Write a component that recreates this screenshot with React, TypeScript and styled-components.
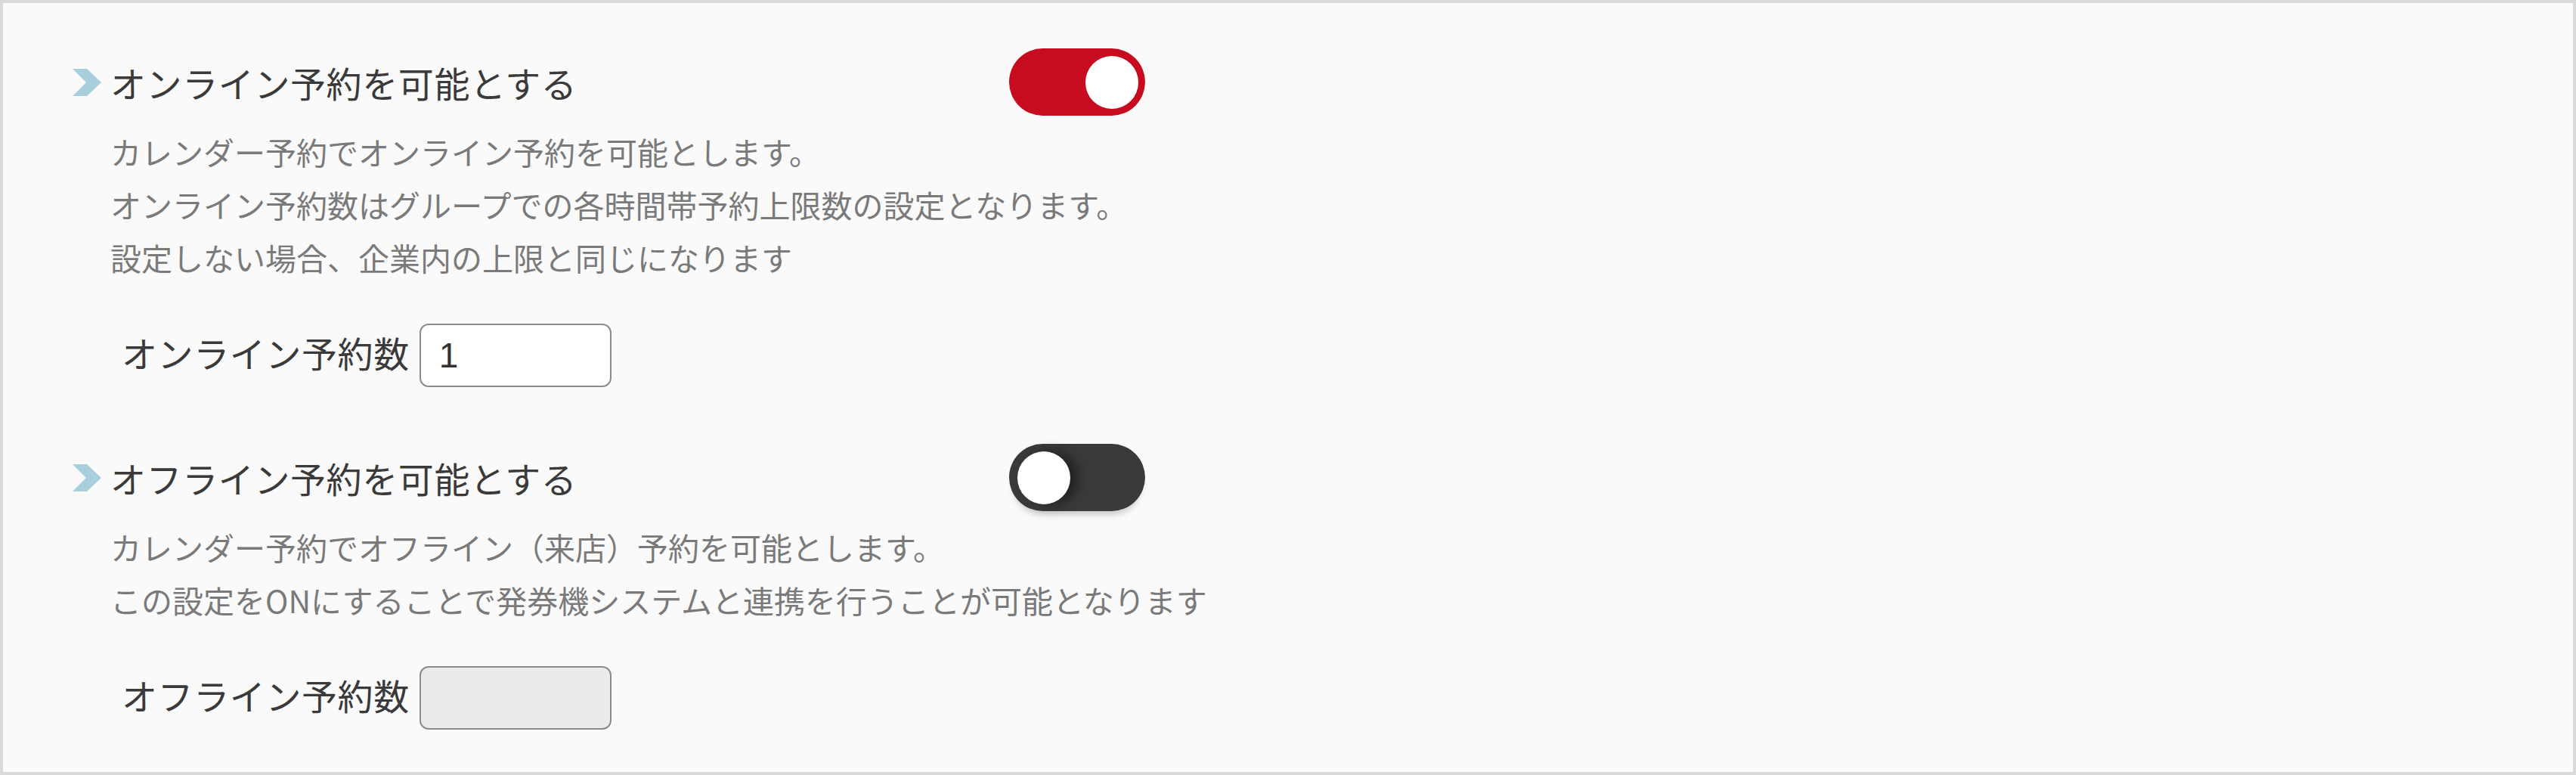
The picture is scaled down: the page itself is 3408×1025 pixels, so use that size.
import React, { useState } from "react"
import styled, { createGlobalStyle } from "styled-components"

const GlobalStyle = createGlobalStyle`
  html, body {
    margin: 0;
    padding: 0;
    background: #fafafa;
  }
  body {
    font-family: "Noto Sans CJK JP", "Noto Sans", sans-serif;
    color: #333;
  }
`

const Panel = styled.div`
  box-sizing: border-box;
  height: 1025px;
  border: 4px solid #d9d9d9;
  background: #fafafa;
  padding: 60px 0 0 92px;
`

const Section = styled.section`
  & + & {
    margin-top: 75px;
  }
`

const HeaderRow = styled.div`
  display: grid;
  grid-template-columns: 1239px 180px;
  align-items: center;
  height: 89px;
`

const Heading = styled.h3`
  display: flex;
  align-items: center;
  gap: 12px;
  margin: 0;
  font-size: 47px;
  font-weight: 400;
  letter-spacing: 0.6px;
  color: #3a3a3a;
  line-height: 1;
`

const Description = styled.div`
  margin-top: 12px;
  padding-left: 50px;
  font-size: 41px;
  line-height: 70px;
  color: #7a7a7a;
  p {
    margin: 0;
  }
`

const FieldRow = styled.label`
  display: flex;
  align-items: center;
  gap: 13px;
  margin-top: 53px;
  padding-left: 65px;
`

const FieldLabel = styled.span`
  font-size: 47px;
  letter-spacing: 0.6px;
  color: #3a3a3a;
  margin-top: -10px;
`

const NumberInput = styled.input<{ $disabled?: boolean }>`
  box-sizing: border-box;
  width: 254px;
  height: 84px;
  padding: 0 0 0 24px;
  border: 2px solid #8c8c8c;
  border-radius: 12px;
  background: ${(p) => (p.$disabled ? "#ebebeb" : "#fff")};
  font-family: "Liberation Sans", Arial, sans-serif;
  font-size: 46px;
  color: #333;
  outline: none;
`

const Track = styled.button<{ $on: boolean }>`
  position: relative;
  width: 180px;
  height: 89px;
  padding: 0;
  border: none;
  border-radius: 45px;
  cursor: pointer;
  background: ${(p) => (p.$on ? "#c80c1f" : "#3a3a3a")};
  box-shadow: ${(p) => (p.$on ? "none" : "0 10px 10px -6px rgba(0, 0, 0, 0.22)")};
`

const Knob = styled.span<{ $on: boolean }>`
  position: absolute;
  top: 9.5px;
  left: ${(p) => (p.$on ? "101px" : "11px")};
  width: 70px;
  height: 70px;
  border-radius: 50%;
  background: #fff;
  box-shadow: ${(p) => (p.$on ? "none" : "10px 0 16px rgba(0, 0, 0, 0.45)")};
`

const Chevron = () => (
  <svg width="38" height="36" viewBox="0 0 38 36">
    <polygon points="0,0 19,0 38,18 19,36 0,36 18,18" fill="#a8d0dc" />
  </svg>
)

const Toggle = ({ on, onChange }: { on: boolean; onChange: () => void }) => (
  <Track $on={on} onClick={onChange} aria-pressed={on}>
    <Knob $on={on} />
  </Track>
)

type SettingProps = {
  title: string
  lines: string[]
  fieldLabel: string
  value: string
  on: boolean
  onToggle: () => void
}

const Setting = ({ title, lines, fieldLabel, value, on, onToggle }: SettingProps) => (
  <Section>
    <HeaderRow>
      <Heading>
        <Chevron />
        {title}
      </Heading>
      <Toggle on={on} onChange={onToggle} />
    </HeaderRow>
    <Description>
      {lines.map((l) => (
        <p key={l}>{l}</p>
      ))}
    </Description>
    <FieldRow>
      <FieldLabel>{fieldLabel}</FieldLabel>
      <NumberInput
        type="text"
        defaultValue={value}
        disabled={!on}
        $disabled={!on}
      />
    </FieldRow>
  </Section>
)

export default function App() {
  const [online, setOnline] = useState(true)
  const [offline, setOffline] = useState(false)

  return (
    <>
      <GlobalStyle />
      <Panel>
        <Setting
          title="オンライン予約を可能とする"
          lines={[
            "カレンダー予約でオンライン予約を可能とします。",
            "オンライン予約数はグループでの各時間帯予約上限数の設定となります。",
            "設定しない場合、企業内の上限と同じになります",
          ]}
          fieldLabel="オンライン予約数"
          value="1"
          on={online}
          onToggle={() => setOnline(!online)}
        />
        <Setting
          title="オフライン予約を可能とする"
          lines={[
            "カレンダー予約でオフライン（来店）予約を可能とします。",
            "この設定をONにすることで発券機システムと連携を行うことが可能となります",
          ]}
          fieldLabel="オフライン予約数"
          value=""
          on={offline}
          onToggle={() => setOffline(!offline)}
        />
      </Panel>
    </>
  )
}
